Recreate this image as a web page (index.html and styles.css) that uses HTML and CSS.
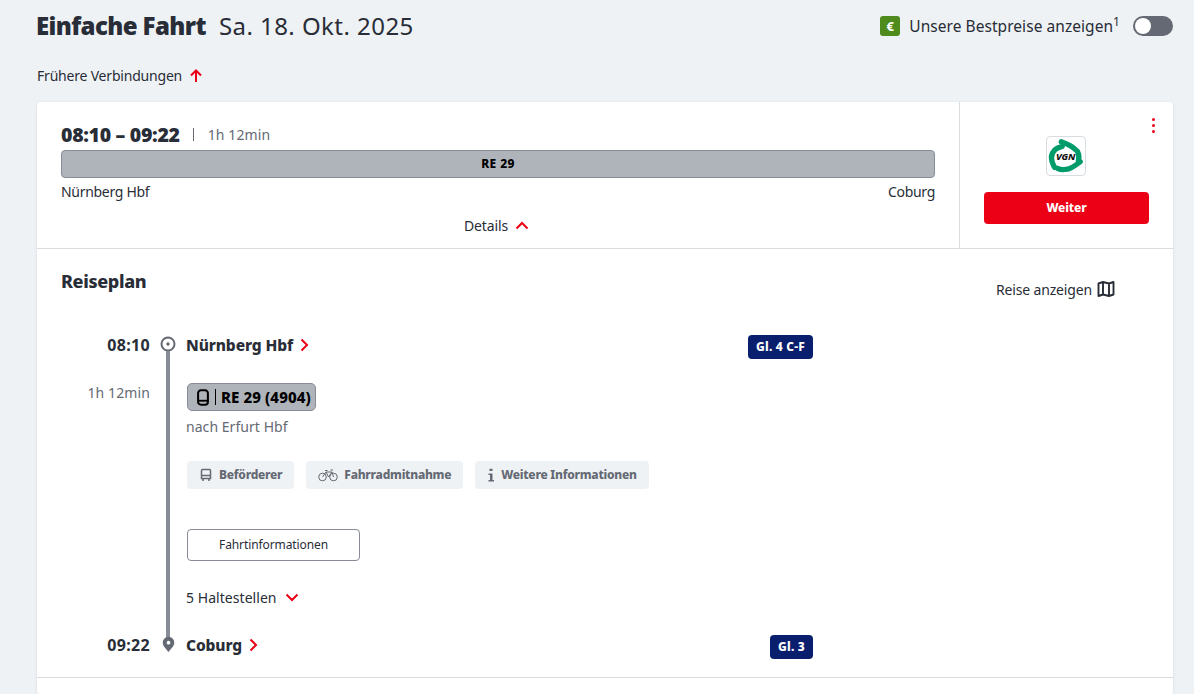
FILE: index.html
```html
<!DOCTYPE html>
<html lang="de">
<head>
<meta charset="utf-8">
<title>Einfache Fahrt</title>
<link rel="stylesheet" href="styles.css">
</head>
<body>
<div class="page">
  <header class="head">
    <h1 class="title"><strong>Einfache Fahrt</strong><span class="date">Sa. 18. Okt. 2025</span></h1>
    <div class="best">
      <span class="euro">€</span>
      <span>Unsere Bestpreise anzeigen<sup>1</sup></span>
      <span class="toggle"><span class="knob"></span></span>
    </div>
  </header>
  <div class="earlier">Frühere Verbindungen
    <svg class="ic-arrow" viewBox="0 0 14 14"><path d="M7 13V2M2 6.500 7 1.500l5 5" fill="none" stroke="#ec0016" stroke-width="2"/></svg>
  </div>
  <main class="card">
    <section class="summary">
      <div class="sum-left">
        <div class="times"><b>08:10 – 09:22</b><span class="sep"></span><span class="dur">1h 12min</span></div>
        <div class="bar">RE 29</div>
        <div class="ends"><span>Nürnberg Hbf</span><span>Coburg</span></div>
        <div class="details">Details
          <svg class="ic-chev" viewBox="0 0 14 9"><path d="M1.500 7.500 7 2l5.500 5.500" fill="none" stroke="#ec0016" stroke-width="2"/></svg>
        </div>
      </div>
      <div class="sum-right">
        <div class="dots"><i></i><i></i><i></i></div>
        <div class="logo">
          <svg viewBox="0 0 40 40" width="38" height="38">
            <path d="M8 32C4 25 3 18 9 13c2-2 4-2 7-3" fill="none" stroke="#009b6b" stroke-width="5.500" stroke-linecap="round"/>
            <path d="M15 5c6 2 13 6 17 10 2 4 2 7 1 10" fill="none" stroke="#009b6b" stroke-width="5.500" stroke-linecap="round"/>
            <path d="M35 26c-5 4-10 8-15 8-4 1-7 0-9-1" fill="none" stroke="#009b6b" stroke-width="5.500" stroke-linecap="round"/>
            <text x="19.500" y="24" text-anchor="middle" class="vgn">VGN</text>
          </svg>
        </div>
        <div class="weiter">Weiter</div>
      </div>
    </section>
    <section class="plan">
      <div class="plan-head">
        <h2 class="plan-title">Reiseplan</h2>
        <div class="show">Reise anzeigen
          <svg class="ic-map" viewBox="0 0 18 18"><path d="M1.500 3.500 6 2l6 1.500L16.500 2v12.500L12 16l-6-1.500-4.500 1.500zM6 2v12.500M12 3.500V16" fill="none" stroke="#282d37" stroke-width="1.900" stroke-linejoin="round"/></svg>
        </div>
      </div>
      <div class="journey">
        <div class="time">08:10</div>
        <div class="rail">
          <svg class="ic-start" viewBox="0 0 16 16"><circle cx="8" cy="8" r="6.500" fill="#fff" stroke="#646973" stroke-width="2"/><circle cx="8" cy="8" r="1.700" fill="#646973"/></svg>
          <span class="line"></span>
          <svg class="ic-pin" viewBox="0 0 14 16"><path d="M7 16C4 12 .8 9.500.8 6a6.200 6.200 0 0 1 12.400 0c0 3.500-3.200 6-6.200 10z" fill="#646973"/><circle cx="7" cy="6" r="2" fill="#fff"/></svg>
        </div>
        <div class="stop">
          <span class="stop-name">Nürnberg Hbf
            <svg class="ic-right" viewBox="0 0 9 14"><path d="M1.500 1.500 7 7l-5.500 5.500" fill="none" stroke="#ec0016" stroke-width="2"/></svg>
          </span>
          <span class="track">Gl. 4 C-F</span>
        </div>
        <div class="dur-side">1h 12min</div>
        <div class="leg">
          <div class="pill">
            <svg class="ic-train" viewBox="0 0 13 18"><rect x="1.200" y="1.200" width="10.600" height="15.600" rx="3" fill="none" stroke="#000" stroke-width="2.200"/><path d="M1.500 12.500h10" stroke="#000" stroke-width="2"/></svg>
            <span class="pill-sep"></span>RE 29 (4904)
          </div>
          <div class="dest">nach Erfurt Hbf</div>
          <div class="chips">
            <span class="chip"><svg class="ic-bus" viewBox="0 0 14 14"><path d="M2.500 2.500a1 1 0 0 1 1-1h7a1 1 0 0 1 1 1v8h-9zM2.500 7.500h9M4 10.500V13M10 10.500V13" fill="none" stroke="#646973" stroke-width="1.500"/></svg>Beförderer</span>
            <span class="chip"><svg class="ic-bike" viewBox="0 0 20 14"><circle cx="4.500" cy="9" r="3.800" fill="none" stroke="#646973"/><circle cx="15.500" cy="9" r="3.800" fill="none" stroke="#646973"/><path d="M4.500 9 8 4h6l1.500 5M8 4l2.500 5 3.500-5M7 2.500h2.500M12.500 2H15" fill="none" stroke="#646973"/></svg>Fahrradmitnahme</span>
            <span class="chip"><svg class="ic-info" viewBox="0 0 8 14"><path d="M2.500 3h3V.8h-3zM1.500 5.500h4V12h1.500v1.500H1.500V12H3V7H1.500z" fill="#646973"/></svg>Weitere Informationen</span>
          </div>
          <div class="outline">Fahrtinformationen</div>
          <div class="stops">5 Haltestellen
            <svg class="ic-chev" viewBox="0 0 14 9"><path d="M1.500 1.500 7 7l5.500-5.500" fill="none" stroke="#ec0016" stroke-width="2"/></svg>
          </div>
        </div>
        <div class="time">09:22</div>
        <div class="stop">
          <span class="stop-name">Coburg
            <svg class="ic-right" viewBox="0 0 9 14"><path d="M1.500 1.500 7 7l-5.500 5.500" fill="none" stroke="#ec0016" stroke-width="2"/></svg>
          </span>
          <span class="track">Gl. 3</span>
        </div>
      </div>
    </section>
    <div class="next"></div>
  </main>
</div>
</body>
</html>
```
FILE: styles.css
```css
* { box-sizing: border-box; }
html, body { height: 100%; }
body { margin: 0; background: #eff2f5; color: #282d37; font-family: "Noto Sans", sans-serif; font-size: 14px; letter-spacing: -.15px; overflow: hidden; }
.page { padding: 10px 21px 0 37px; }
.head { display: flex; justify-content: space-between; align-items: center; height: 32px; }
.title { margin: 0; font-size: 24px; font-weight: 400; line-height: 32px; display: flex; gap: 13px; }
.title strong { font-weight: 900; letter-spacing: -.6px; margin-left: -1px; }
.date { letter-spacing: .45px; }
.best { display: flex; align-items: center; font-size: 15.500px; letter-spacing: .05px; }
.best sup { font-size: 12px; line-height: 0; }
.euro { width: 20px; height: 20px; border-radius: 3px; background: #4f8a1c; color: #fff; font-size: 13px; font-weight: 700; display: flex; align-items: center; justify-content: center; margin-right: 9px; }
.toggle { width: 40px; height: 20px; border-radius: 10px; background: #646973; margin-left: 13px; padding: 2px; display: block; }
.knob { display: block; width: 16px; height: 16px; border-radius: 50%; background: #fff; }
.earlier { margin-top: 24px; height: 20px; line-height: 20px; display: flex; align-items: center; gap: 7px; letter-spacing: -.2px; }
.ic-arrow { width: 14px; height: 14px; }
.card { margin-top: 16px; background: #fff; border-radius: 4px; box-shadow: 0 1px 3px rgba(40,45,55,.12); }
.summary { display: flex; height: 147px; border-bottom: 1px solid #d7dce1; }
.sum-left { width: 923px; padding: 20px 24px 0; border-right: 1px solid #d7dce1; }
.times { display: flex; align-items: center; height: 24px; }
.times b { font-size: 19.500px; font-weight: 900; letter-spacing: -.3px; }
.sep { width: 1px; height: 13px; background: #646973; margin: 0 14px 0 13px; }
.dur { color: #646973; letter-spacing: .1px; }
.bar { margin-top: 4px; height: 28px; background: #afb4bb; border: 1px solid #878c96; border-radius: 4px; font-size: 12px; font-weight: 800; line-height: 26px; letter-spacing: .4px; text-align: center; color: #000; }
.ends { display: flex; justify-content: space-between; margin-top: 4px; height: 20px; line-height: 20px; letter-spacing: -.3px; }
.details { display: flex; justify-content: center; align-items: center; gap: 7px; margin-top: 13px; height: 20px; padding-right: 3px; }
.ic-chev { width: 14px; height: 9px; }
.sum-right { flex: 1; position: relative; display: flex; flex-direction: column; align-items: center; padding-top: 34px; }
.dots { position: absolute; top: 16px; right: 18px; display: flex; flex-direction: column; gap: 2.500px; }
.dots i { display: block; width: 3.300px; height: 3.300px; border-radius: 50%; background: #ec0016; }
.logo { width: 40px; height: 40px; border: 1px solid #d7dce1; border-radius: 4px; background: #fff; display: flex; align-items: center; justify-content: center; margin-right: 1px; }
.vgn { font: italic 800 10px "Noto Sans", sans-serif; fill: #111; }
.weiter { margin-top: 16px; width: 165px; height: 32px; border-radius: 4px; background: #ec0016; color: #fff; font-size: 12px; font-weight: 800; line-height: 32px; text-align: center; }
.plan { padding: 20px 24px 0; height: 429px; border-bottom: 1px solid #d7dce1; }
.plan-head { display: flex; justify-content: space-between; height: 64px; }
.plan-title { margin: -1px 0 1px; font-size: 18px; font-weight: 800; line-height: 26px; letter-spacing: -.35px; }
.show { display: flex; align-items: center; gap: 5px; height: 24px; margin: 8px 34px 0 0; }
.ic-map { width: 18px; height: 18px; }
.journey { display: grid; grid-template-columns: 89px 37px 626px; grid-template-rows: 24px auto 24px; }
.time { font-size: 16px; font-weight: 700; line-height: 24px; letter-spacing: .35px; text-align: right; }
.rail { grid-column: 2; grid-row: 1 / 4; display: flex; flex-direction: column; align-items: center; padding-right: 1px; }
.ic-start { width: 16px; height: 16px; flex: none; margin-top: 3px; }
.line { flex: 1; width: 4px; background: #878c96; margin-top: -1px; margin-bottom: -3px; }
.ic-pin { width: 13px; height: 15px; flex: none; margin-bottom: 5px; }
.stop { display: flex; justify-content: space-between; align-items: center; height: 24px; }
.stop-name { display: flex; align-items: center; gap: 7px; font-size: 15.500px; font-weight: 800; letter-spacing: -.1px; margin-left: -1px; }
.ic-right { width: 9px; height: 14px; }
.track { background: #0a1e6e; color: #fff; border-radius: 4px; font-size: 12px; font-weight: 800; height: 24px; line-height: 24px; padding: 0 8px; letter-spacing: .2px; margin-top: 4px; }
.dur-side { grid-column: 1; color: #646973; text-align: right; margin-top: 26px; line-height: 20px; letter-spacing: .1px; }
.leg { grid-column: 3; padding-top: 26px; }
.pill { display: inline-flex; align-items: center; height: 28px; padding: 0 4px 0 9px; background: #afb4bb; border: 1px solid #878c96; border-radius: 5px; font-size: 15px; font-weight: 800; letter-spacing: .1px; color: #000; vertical-align: top; }
.ic-train { width: 12px; height: 17px; }
.pill-sep { width: 1px; height: 16px; background: #000; margin: 0 5px 0 6px; }
.dest { margin-top: 6px; margin-left: -1px; color: #646973; line-height: 20px; letter-spacing: .05px; }
.chips { display: flex; gap: 12px; margin-top: 24px; }
.chip { display: flex; align-items: center; height: 28px; padding: 0 12px 1px; background: #eff2f5; border-radius: 4px; color: #646973; font-size: 12px; font-weight: 800; letter-spacing: -.25px; gap: 6px; }
.ic-bus { width: 14px; height: 14px; }
.ic-bike { width: 20px; height: 14px; }
.ic-info { width: 8px; height: 14px; }
.outline { margin-top: 40px; width: 173px; height: 32px; border: 1px solid #878c96; border-radius: 4px; text-align: center; line-height: 30px; font-size: 12px; letter-spacing: -.1px; }
.stops { display: flex; align-items: center; gap: 8px; margin: 26px 0 26px -1px; height: 20px; letter-spacing: .05px; }
.next { height: 17px; }
```
